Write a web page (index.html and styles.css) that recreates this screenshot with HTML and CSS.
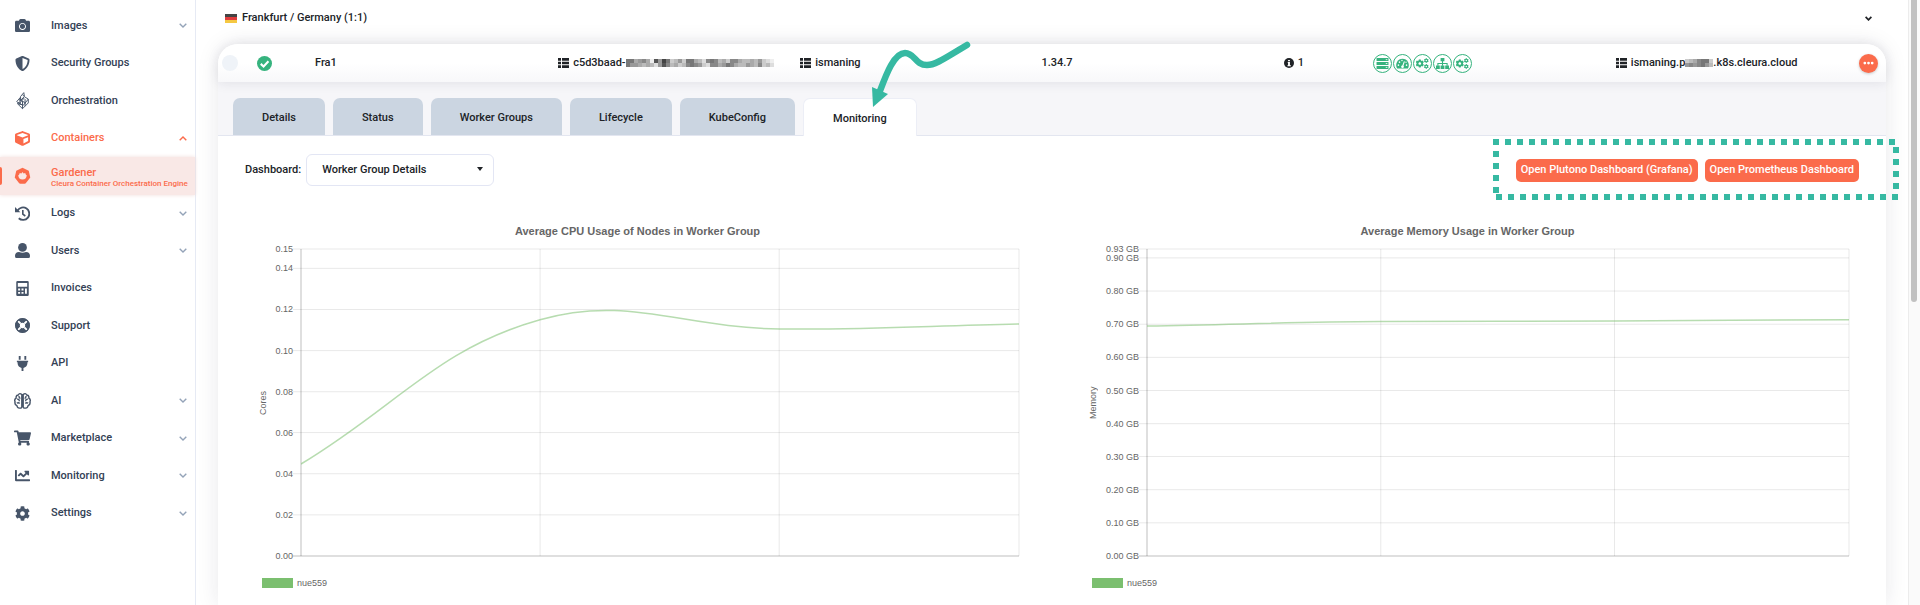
FILE: index.html
```html
<!DOCTYPE html>
<html lang="en">
<head>
<meta charset="utf-8">
<title>Gardener – Monitoring</title>
<link rel="stylesheet" href="styles.css">
</head>
<body>
<svg class="defs" aria-hidden="true">
  <symbol id="chev" viewBox="0 0 8 5"><path d="M.7.7 4 4 7.3.7" fill="none" stroke="currentColor"/></symbol>
  <symbol id="list" viewBox="0 0 22 20"><path d="M0 0h6v5.400H0zM8 0h14v5.400H8zM0 7.300h6v5.400H0zM8 7.300h14v5.400H8zM0 14.600h6V20H0zM8 14.600h14V20H8z"/></symbol>
  <symbol id="cog" viewBox="0 0 512 512"><path d="M487.400 315.700l-42.600-24.600c4.300-23.200 4.300-47 0-70.200l42.600-24.600c4.900-2.800 7.100-8.600 5.500-14-11.100-35.600-30-67.800-54.700-94.600-3.800-4.100-10-5.100-14.800-2.300L380.800 110c-17.900-15.400-38.500-27.300-60.800-35.100V25.800c0-5.600-3.900-10.500-9.400-11.700-36.700-8.200-74.300-7.800-109.200 0-5.500 1.200-9.400 6.100-9.400 11.700V75c-22.200 7.900-42.800 19.800-60.800 35.100L88.700 85.500c-4.900-2.800-11-1.900-14.800 2.300-24.700 26.700-43.600 58.900-54.700 94.600-1.700 5.400.6 11.200 5.500 14L67.300 221c-4.300 23.200-4.300 47 0 70.200l-42.600 24.600c-4.900 2.800-7.100 8.600-5.500 14 11.100 35.600 30 67.800 54.700 94.600 3.800 4.100 10 5.100 14.800 2.300l42.600-24.600c17.900 15.400 38.500 27.300 60.800 35.100v49.200c0 5.600 3.900 10.500 9.400 11.700 36.700 8.200 74.300 7.800 109.200 0 5.500-1.200 9.400-6.100 9.400-11.700v-49.200c22.200-7.900 42.800-19.800 60.800-35.100l42.600 24.600c4.900 2.800 11 1.900 14.800-2.300 24.700-26.700 43.600-58.900 54.700-94.600 1.500-5.500-.7-11.300-5.600-14.100zM256 336c-44.100 0-80-35.900-80-80s35.900-80 80-80 80 35.900 80 80-35.900 80-80 80z"/></symbol>
  <symbol id="cogs" viewBox="0 0 24 20"><use href="#cog" x="-1" y="2" width="16" height="16"/><use href="#cog" x="14" y="0" width="10" height="9"/><use href="#cog" x="14" y="11" width="10" height="9"/></symbol>
</svg>

<nav class="sidebar" aria-label="Main">
  <a class="nav" href="#"><svg viewBox="0 0 512 512"><path d="M512 144v288c0 26.500-21.500 48-48 48H48c-26.500 0-48-21.500-48-48V144c0-26.500 21.500-48 48-48h88l12.300-32.900c7-18.700 24.900-31.100 44.900-31.100h125.500c20 0 37.900 12.400 44.900 31.100L376 96h88c26.500 0 48 21.500 48 48zM376 288c0-66.200-53.800-120-120-120s-120 53.800-120 120 53.800 120 120 120 120-53.800 120-120zm-32 0c0 48.500-39.500 88-88 88s-88-39.500-88-88 39.500-88 88-88 88 39.500 88 88z"/></svg><span>Images</span><svg class="chev"><use href="#chev"/></svg></a>
  <a class="nav" href="#"><svg viewBox="0 0 512 512"><path d="M466.500 83.700l-192-80a48.150 48.150 0 0 0-36.900 0l-192 80C27.700 91.100 16 108.600 16 128c0 198.500 114.500 335.700 221.500 380.300 11.800 4.900 25.100 4.900 36.900 0C360.100 472.600 496 349.300 496 128c0-19.400-11.700-36.900-29.500-44.300zM256.100 446.300l-.1-381 175.900 73.300c-3.300 151.400-82.100 261.100-175.800 307.700z"/></svg><span>Security Groups</span></a>
  <a class="nav" href="#"><svg class="big" viewBox="0 0 24 28"><g fill="none" stroke="currentColor" stroke-width="1.500"><path d="M14 1 9 7v6l6-6zM9 8 3 15l4 3 8-9M16 8l5 3-8 10-8-5M7 12l10 5M12 4.500 15 7M12 14v12l9-9v-6M16 11v11M12 20l-8-2 8 8M8 9.500v10M9 14l4-5"/></g></svg><span>Orchestration</span></a>
  <a class="nav accent" href="#"><svg viewBox="0 0 512 512"><path d="M239.100 6.300l-208 78c-18.700 7-31.100 25-31.100 45v225.100c0 18.200 10.300 34.800 26.500 42.900l208 104c13.500 6.800 29.400 6.800 42.900 0l208-104c16.300-8.100 26.500-24.800 26.500-42.900V129.300c0-20-12.400-37.900-31.100-44.900l-208-78C262 2.200 250 2.200 239.100 6.300zM256 68.400l192 72v1.100l-192 78-192-78v-1.100l192-72zm32 356V275.500l160-65v133.900l-160 80z"/></svg><span>Containers</span><svg class="chev up"><use href="#chev"/></svg></a>
  <a class="nav accent current" href="#" aria-current="page"><svg class="big" viewBox="0 0 24 24"><path fill-rule="evenodd" d="M12 .5 20.800 4.700 23 14.200 16.900 22q-.5 1-2 1H9q-1.300 0-2-1L1 14.200 3.200 4.700zM12 6.200l-1.600 2.300-2.200-.9-1 2.600-1.200.6q.4 6 6 6.200 5.600-.2 6-6.200l-1.200-.6-1-2.600-2.200.9z"/></svg><span>Gardener<small>Cleura Container Orchestration Engine</small></span></a>
  <a class="nav" href="#"><svg viewBox="0 0 24 24"><path d="M4.200 7.200A10 10 0 1 1 6 19.600" fill="none" stroke="currentColor" stroke-width="3"/><path d="M0 1.500V10h8.500z"/><path d="M12.500 6.500v6.500l4 3" fill="none" stroke="currentColor" stroke-width="2.600"/></svg><span>Logs</span><svg class="chev"><use href="#chev"/></svg></a>
  <a class="nav" href="#"><svg viewBox="0 0 24 24"><circle cx="12" cy="7" r="7"/><path d="M0 21q0-6.500 6.500-6.500 5.500 2.500 11 0 6.500 0 6.500 6.500 0 3-2.500 3h-19Q0 24 0 21z"/></svg><span>Users</span><svg class="chev"><use href="#chev"/></svg></a>
  <a class="nav" href="#"><svg viewBox="0 0 24 24"><path fill-rule="evenodd" d="M4 0h16q2 0 2 2v20q0 2-2 2H4q-2 0-2-2V2q0-2 2-2zM4.500 3v6h15V3zM5 12v3h3.200v-3zM10.400 12v3h3.200v-3zM16 12v8.500h3V12zM5 17.500v3h3.200v-3zM10.400 17.500v3h3.200v-3z"/></svg><span>Invoices</span></a>
  <a class="nav" href="#"><svg viewBox="0 0 24 24"><circle cx="12" cy="12" r="8" fill="none" stroke="currentColor" stroke-width="7.500"/><path d="M5 5l4 4M19 5 15 9M5 19 9 15M19 19 15 15" stroke="#fff" stroke-width="3"/><circle cx="12" cy="12" r="11" fill="none" stroke="currentColor" stroke-width="1.800"/></svg><span>Support</span></a>
  <a class="nav" href="#"><svg viewBox="0 0 24 24"><path d="M6 0h3v6H6zM15 0h3v6h-3zM3 7.500h18V10h-1.200v2.500q-.8 5.500-6.300 6.500v5h-3v-5q-5.500-1-6.300-6.500V10H3z"/></svg><span>API</span></a>
  <a class="nav" href="#"><svg class="big" viewBox="0 0 24 24"><g fill="none" stroke="currentColor" stroke-width="2"><path d="M11 3Q8 0 6 3.500 2.500 4 3 8 0 10 1.500 13 .5 17 4 18.500 5 22.500 8 22q3 .5 3-2zM13 3q3-3 5 .5 3.500.5 3 4.500 3 2 1.500 5 1 4-2.500 5.500-1 4-4 3.500-3 .5-3-2zM7 5q0 3 2 3.500M4.500 9.500q3-.5 3 3M4 15q2.500-1.500 4 .5M17 5q0 3-2 3.500M19.500 9.500q-3-.5-3 3M20 15q-2.500-1.500-4 .5"/></g></svg><span>AI</span><svg class="chev"><use href="#chev"/></svg></a>
  <a class="nav" href="#"><svg class="big" viewBox="0 0 576 512"><path d="M528.120 301.319l47.273-208C578.806 78.301 567.391 64 551.990 64H159.208l-9.166-44.810C147.758 8.021 137.930 0 126.529 0H24C10.745 0 0 10.745 0 24v16c0 13.255 10.745 24 24 24h69.883l70.248 343.435C147.325 417.100 136 435.222 136 456c0 30.928 25.072 56 56 56s56-25.072 56-56c0-15.674-6.447-29.835-16.824-40h209.647C430.447 426.165 424 440.326 424 456c0 30.928 25.072 56 56 56s56-25.072 56-56c0-22.172-12.888-41.332-31.579-50.405l5.517-24.276c3.413-15.018-8.002-29.319-23.403-29.319H218.117l-6.545-32h293.145c11.206 0 20.920-7.754 23.403-18.681z"/></svg><span>Marketplace</span><svg class="chev"><use href="#chev"/></svg></a>
  <a class="nav" href="#"><svg viewBox="0 0 512 512"><path d="M496 384H64V80c0-8.840-7.160-16-16-16H16C7.160 64 0 71.160 0 80v336c0 17.670 14.330 32 32 32h464c8.840 0 16-7.160 16-16v-32c0-8.840-7.160-16-16-16zM464 96H345.940c-21.380 0-32.090 25.850-16.970 40.970l32.400 32.400L288 242.750l-73.370-73.370c-12.500-12.500-32.760-12.500-45.250 0l-68.690 68.690c-6.250 6.250-6.250 16.380 0 22.630l22.620 22.620c6.250 6.250 16.380 6.250 22.630 0L192 237.250l73.370 73.370c12.500 12.500 32.760 12.500 45.250 0l96-96 32.400 32.400c15.120 15.120 40.970 4.410 40.970-16.970V112c.01-8.840-7.150-16-15.990-16z"/></svg><span>Monitoring</span><svg class="chev"><use href="#chev"/></svg></a>
  <a class="nav" href="#"><svg><use href="#cog"/></svg><span>Settings</span><svg class="chev"><use href="#chev"/></svg></a>
</nav>

<main class="main">
  <header class="region">
    <svg class="flag" viewBox="0 0 12 9" preserveAspectRatio="none"><path fill="#444" d="M0 0h12v3H0z"/><path fill="#e03c3c" d="M0 3h12v3H0z"/><path fill="#f5c842" d="M0 6h12v3H0z"/></svg>
    <span>Frankfurt / Germany (1:1)</span>
    <button class="collapse" aria-label="Collapse region"><svg><use href="#chev"/></svg></button>
  </header>

  <section class="card">
    <div class="cluster">
      <input class="pick" type="checkbox" aria-label="Select cluster">
      <svg class="ok" viewBox="0 0 16 16"><circle cx="8" cy="8" r="8" fill="#36b37e"/><path d="M4 8.400 7 11.200 12.200 5.600" fill="none" stroke="#fff" stroke-width="2.200"/></svg>
      <span>Fra1</span>
      <span class="item"><svg class="list"><use href="#list"/></svg><span class="masked">c5d3baad-<svg class="mosaic" data-rows="77a98ae5947cb9c77abd878bac88abbab9cde,799ababd958bacb8789cd88a978abb9ab8cbd"></svg></span></span>
      <span class="item"><svg class="list"><use href="#list"/></svg>ismaning</span>
      <span>1.34.7</span>
      <span class="item info"><svg viewBox="0 0 16 16"><circle cx="8" cy="8" r="8"/><path d="M6.500 3h3v2.300h-3zM6 6.500h3.500v5H11V13H5.500v-1.500h1V8H6z" fill="#fff"/></svg>1</span>
      <span class="badges">
        <i><svg viewBox="0 0 24 20"><path d="M1 0h22v5.500H1zM1 7.200h22v5.600H1zM1 14.500h22V20H1z"/><path d="M18 2.800h3M18 10h3M18 17.200h3" stroke="#fff" stroke-width="1.500"/></svg></i>
        <i><svg viewBox="0 0 24 20"><path d="M12 1A12 12 0 0 0 2 19h20A12 12 0 0 0 12 1z"/><path d="M12 16l3.500-10" stroke="#fff" stroke-width="2"/><g fill="#fff"><circle cx="12" cy="16" r="2.500"/><circle cx="4.500" cy="13" r="1.500"/><circle cx="6.500" cy="7.500" r="1.500"/><circle cx="11" cy="4.500" r="1.300"/><circle cx="19.500" cy="13" r="1.500"/><circle cx="18.500" cy="7.500" r="1.300"/></g></svg></i>
        <i><svg><use href="#cogs"/></svg></i>
        <i><svg viewBox="0 0 24 20"><path d="M8.500 0h7v6h-7zM0 13.500h7V20H0zM8.500 13.500h7V20h-7zM17 13.500h7V20h-7z"/><path d="M12 5v9M3.500 14v-4h17v4" fill="none" stroke="currentColor" stroke-width="2"/></svg></i>
        <i><svg><use href="#cogs"/></svg></i>
      </span>
      <span class="item"><svg class="list"><use href="#list"/></svg><span class="masked">ismaning.p<svg class="mosaic" data-rows="cba877c,989879b"></svg>.k8s.cleura.cloud</span></span>
      <button class="more" aria-label="Actions"><svg viewBox="0 0 12 4"><circle cx="2" cy="2" r="1.500"/><circle cx="6" cy="2" r="1.500"/><circle cx="10" cy="2" r="1.500"/></svg></button>
    </div>

    <div class="tabs" role="tablist">
      <button class="tab" role="tab">Details</button>
      <button class="tab" role="tab">Status</button>
      <button class="tab" role="tab">Worker Groups</button>
      <button class="tab" role="tab">Lifecycle</button>
      <button class="tab" role="tab">KubeConfig</button>
      <button class="tab active" role="tab" aria-selected="true">Monitoring
        <svg class="arrow" viewBox="0 0 104 70"><path d="M97 8C78 19 66 28 57 28 45 28 45 16 35 16 24 16 16 38 10 54" fill="none" stroke="#36b9a2" stroke-width="6.500" stroke-linecap="round"/><path d="M2 50 18 57 3 70z" fill="#36b9a2"/></svg>
      </button>
    </div>

    <div class="toolbar">
      <label for="dashboard">Dashboard:</label>
      <div class="select"><select id="dashboard"><option>Worker Group Details</option></select><svg viewBox="0 0 6 4"><path d="M0 0h6L3 4z"/></svg></div>
      <div class="actions">
        <button class="open">Open Plutono Dashboard (Grafana)</button>
        <button class="open">Open Prometheus Dashboard</button>
        <svg class="marquee" viewBox="0 0 406 61"><path d="M0 3H403M3 12V54M3 58H406M403 8V54" fill="none" stroke="#36b9a2" stroke-width="6" stroke-dasharray="6 6"/></svg>
      </div>
    </div>

    <div class="charts">
      <figure class="chart" data-chart="cpu">
        <figcaption>Average CPU Usage of Nodes in Worker Group</figcaption>
        <div class="plot"><span class="unit">Cores</span><svg class="graph"></svg></div>
        <div class="legend"><i></i>nue559</div>
      </figure>
      <figure class="chart wide-axis" data-chart="memory">
        <figcaption>Average Memory Usage in Worker Group</figcaption>
        <div class="plot"><span class="unit">Memory</span><svg class="graph"></svg></div>
        <div class="legend"><i></i>nue559</div>
      </figure>
    </div>
  </section>
</main>
<div class="scrollbar" aria-hidden="true"><div class="thumb"></div></div>
<script src="charts.js"></script>
</body>
</html>
```
FILE: styles.css
```css
* { box-sizing: border-box; }

body {
  margin: 0;
  min-height: 100vh;
  display: flex;
  overflow: hidden;
  background: #fff;
  color: #202327;
  font: 500 11px/16px Roboto, sans-serif;
}

button, select { font: inherit; color: inherit; border: 0; margin: 0; }
svg { fill: currentColor; flex: none; }
.defs { position: absolute; width: 0; height: 0; }

/* Sidebar */
.sidebar {
  flex: none;
  width: 195px;
  min-height: 100vh;
  padding: 7px 0 73px;
  display: grid;
  grid-template-columns: minmax(0, 1fr);
  grid-auto-rows: 1fr;
  box-shadow: 1px 0 #e6eaf4;
}
.nav {
  display: grid;
  grid-template-columns: 17px minmax(0, 1fr) 8px;
  column-gap: 20px;
  align-items: center;
  padding: 0 8px 0 14px;
  color: #334155;
  text-decoration: none;
}
.nav > svg { width: 15px; height: 15px; justify-self: center; color: #475569; }
.nav > svg.big { width: 17px; height: 18px; }
.nav > svg.chev { width: 8px; height: 5px; color: #94a3b8; stroke-width: 1.4; }
.nav.accent, .nav.accent > svg { color: #fb6b4b; }
.nav > svg.up { transform: rotate(180deg); }
.nav span { white-space: nowrap; }
.nav small { display: block; font-size: 8px; line-height: 10px; }
.nav.current {
  background: #f9e8e6;
  box-shadow: 0 0 4px #f0dcda;
  position: relative;
  line-height: 12px;
}
.nav.current span { padding-top: 4px; }
.nav.current::before {
  content: "";
  position: absolute;
  left: 0;
  top: 10px;
  bottom: 10px;
  width: 2px;
  background: #fb6b4b;
  border-radius: 0 2px 2px 0;
}

/* Main column */
.main {
  flex: 1;
  min-width: 0;
  padding: 0 22px 0 23px;
  display: flex;
  flex-direction: column;
}
.region {
  display: flex;
  align-items: center;
  gap: 5px;
  padding: 10px 14px 18px 7px;
}
.flag { width: 12px; height: 9px; }
.collapse { margin-left: auto; padding: 0; background: none; display: flex; }
.collapse svg { width: 7px; height: 5px; stroke-width: 2; }

.card {
  flex: 1;
  border-radius: 20px 20px 0 0;
  box-shadow: 0 0 22px rgba(30, 30, 60, .1);
}
.cluster {
  display: grid;
  grid-template-columns: 39px 58px 243fr 242fr 241fr 242fr 89fr 243fr 243fr 27px;
  align-items: center;
  height: 38px;
  border-radius: 20px 20px 0 0;
  background: linear-gradient(#fff 50%, #f8f8fa);
  box-shadow: 0 1px 12px rgba(30, 30, 60, .1);
  position: relative;
}
.pick {
  appearance: none;
  width: 16px;
  height: 16px;
  margin: 0 0 0 4px;
  border-radius: 8px;
  background: #eff3f8;
}
.ok { width: 15px; height: 15px; }
.item { display: flex; align-items: center; gap: 4px; white-space: nowrap; }
.list { width: 11px; height: 10px; }
.masked { display: flex; align-items: center; }
.info svg { width: 10px; height: 10px; }
.badges { display: flex; gap: 1px; color: #36b37e; }
.badges i {
  width: 19px;
  height: 19px;
  border: 1px solid;
  border-radius: 10px;
  display: grid;
  place-items: center;
}
.badges svg { width: 13px; height: 11px; }
.more {
  width: 19px;
  height: 19px;
  padding: 0;
  border-radius: 10px;
  background: #fb6b4b;
  color: #fff;
  display: grid;
  place-items: center;
  box-shadow: 0 1px 3px rgba(0, 0, 0, .2);
}
.more svg { width: 11px; height: 4px; }

/* Tabs */
.tabs {
  display: flex;
  gap: 8px;
  padding: 16px 15px 0;
  background: #f6f6f9;
  border-bottom: 1px solid #e3e6f0;
}
.tab {
  height: 37px;
  padding: 2px 29px 0;
  border-radius: 7px 7px 0 0;
  background: #cbd5e1;
}
.tab.active {
  position: relative;
  background: #fff;
  margin-bottom: -1px;
  height: 38px;
  border: 1px solid #eceef6;
  border-bottom: 0;
}
.arrow { position: absolute; left: 66px; top: -62px; width: 104px; height: 70px; }

/* Toolbar */
.toolbar { display: flex; align-items: center; padding: 18px 27px 0; }
.select { position: relative; margin-left: 5px; }
.select select {
  appearance: none;
  width: 188px;
  height: 32px;
  padding: 0 15px;
  border: 1px solid #e3e6f4;
  border-radius: 6px;
  background: #fff;
}
.select svg { position: absolute; right: 11px; top: 13px; width: 6px; height: 4px; }
.actions { position: relative; margin-left: auto; display: flex; gap: 7px; }
.open {
  height: 23px;
  padding: 0 5px;
  border-radius: 5px;
  background: #fb6b4b;
  color: #fff;
}
.marquee { position: absolute; right: -40px; top: -20px; width: 406px; height: 61px; pointer-events: none; }

/* Charts */
.charts {
  display: grid;
  grid-template-columns: 1fr 1fr;
  gap: 73px;
  padding: 38px 37px 16px 44px;
  font: 9px/12px "Liberation Sans", Arial, sans-serif;
  color: #666;
}
.chart { margin: 0; }
.chart figcaption {
  padding-right: 6px;
  text-align: center;
  font-size: 11px;
  line-height: 14px;
  font-weight: 700;
}
.plot { display: flex; margin-top: 11px; }
.unit {
  width: 12px;
  margin: 0 32px 0 -5px;
  writing-mode: vertical-rl;
  transform: rotate(180deg);
  text-align: center;
}
.wide-axis .unit { margin-right: 48px; }
.graph { flex: 1; min-width: 0; height: 307px; overflow: visible; }
.graph text { fill: #666; text-anchor: end; }
.grid { stroke: #000; stroke-opacity: .09; }
.axis { stroke: #000; stroke-opacity: .25; }
.series { fill: none; stroke: #7bbf6f; stroke-opacity: .55; stroke-width: 1.5; vector-effect: non-scaling-stroke; }
.legend { display: flex; align-items: center; gap: 4px; margin-top: 21px; }
.legend i { width: 31px; height: 10px; background: #7bbf6f; }

/* Page scrollbar */
.scrollbar { flex: none; width: 12px; background: #fafafa; border-left: 1px solid #ececec; padding: 0 3px 0 2px; }
.thumb { height: 302px; border-radius: 0 0 4px 4px; background: #c1c1c1; }
```
FILE: charts.js
```js
const NS = 'http://www.w3.org/2000/svg';

function add(parent, name, attrs, text) {
  const el = document.createElementNS(NS, name);
  for (const key in attrs) el.setAttribute(key, attrs[key]);
  if (text) el.textContent = text;
  parent.appendChild(el);
  return el;
}

const charts = {
  cpu: {
    ticks: [['0.15', 0], ['0.14', 6.3], ['0.12', 19.7], ['0.10', 33.1], ['0.08', 46.5],
            ['0.06', 59.8], ['0.04', 73.2], ['0.02', 86.6], ['0.00', 100]],
    line: 'M0 215C96 157.300 136 99.700 239 70.700C327 45.700 382 79.100 478.500 80C574 80.900 622 77 718 75'
  },
  memory: {
    ticks: [['0.93 GB', 0], ['0.90 GB', 2.9], ['0.80 GB', 13.7], ['0.70 GB', 24.5], ['0.60 GB', 35.3],
            ['0.50 GB', 46.1], ['0.40 GB', 56.9], ['0.30 GB', 67.6], ['0.20 GB', 78.4],
            ['0.10 GB', 89.2], ['0.00 GB', 100]],
    line: 'M0 77C96 75.500 144 73 239 72.600C335 72 383 72.300 478.500 72C574 71.500 622 71 718 70.800'
  }
};

document.querySelectorAll('.chart').forEach(figure => {
  const svg = figure.querySelector('.graph');
  const { ticks, line } = charts[figure.dataset.chart];
  ticks.forEach(([label, pct]) => {
    add(svg, 'line', { class: pct === 100 ? 'axis' : 'grid', x1: -8, x2: '100%', y1: pct + '%', y2: pct + '%' });
    add(svg, 'text', { x: -8, y: pct + '%', dy: 3 }, label);
  });
  [0, 33.3, 66.6, 100].forEach(pct => {
    add(svg, 'line', { class: pct ? 'grid' : 'axis', x1: pct + '%', x2: pct + '%', y1: 0, y2: '100%' });
  });
  const inner = add(svg, 'svg', { viewBox: '0 0 718 307', preserveAspectRatio: 'none', width: '100%', height: '100%' });
  add(inner, 'path', { class: 'series', d: line });
});

// Obscured identifiers: one hex digit of grey for each 4px block
document.querySelectorAll('.mosaic').forEach(svg => {
  const rows = svg.dataset.rows.split(',');
  svg.setAttribute('width', rows[0].length * 4);
  svg.setAttribute('height', rows.length * 4);
  rows.forEach((row, y) => [...row].forEach((c, x) => {
    add(svg, 'rect', { x: x * 4, y: y * 4, width: 4, height: 4, fill: '#' + c + c + c });
  }));
});
```
